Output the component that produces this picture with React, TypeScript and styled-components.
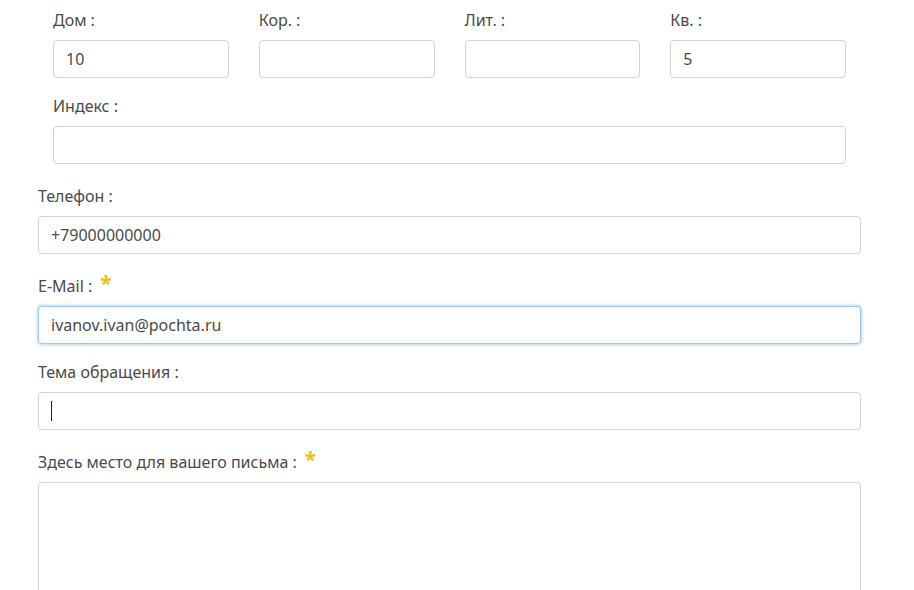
import React from 'react'
import styled, { createGlobalStyle, css } from 'styled-components'

const GlobalStyle = createGlobalStyle`
    body {
        margin: 0;
        background: #fff;
        font-family: "Noto Sans", "Open Sans", sans-serif;
        color: #454545;
    }
`

type FieldDef = {
    label: string
    value?: string
    required?: boolean
    focused?: boolean
    caret?: boolean
}

const addressRow: FieldDef[] = [
    { label: 'Дом :', value: '10' },
    { label: 'Кор. :' },
    { label: 'Лит. :' },
    { label: 'Кв. :', value: '5' },
]

const Field: React.FC<FieldDef> = ({ label, value, required, focused, caret }) => (
    <FieldBox>
        <Label $required={required}>
            {label}
            {required && <Star>*</Star>}
        </Label>
        <InputWrap>
            <Input defaultValue={value} $focused={focused} />
            {caret && <Caret />}
        </InputWrap>
    </FieldBox>
)

const App: React.FC = () => {
    return (
        <>
            <GlobalStyle />
            <Form onSubmit={(e) => e.preventDefault()}>
                <Address>
                    <Row>
                        {addressRow.map((f) => (
                            <Field key={f.label} {...f} />
                        ))}
                    </Row>
                    <Field label="Индекс :" />
                </Address>
                <Field label="Телефон :" value="+79000000000" />
                <Field label="E-Mail :" value="ivanov.ivan@pochta.ru" required focused />
                <Field label="Тема обращения :" caret />
                <FieldBox>
                    <Label $required>
                        Здесь место для вашего письма :
                        <Star>*</Star>
                    </Label>
                    <TextArea />
                </FieldBox>
            </Form>
        </>
    )
}

const Form = styled.form`
    width: 823px;
    margin-left: 38px;
    padding-top: 10px;
`

const Address = styled.div`
    padding: 0 15px 4px;
`

const Row = styled.div`
    display: grid;
    grid-template-columns: repeat(4, 1fr);
    column-gap: 30px;
`

const FieldBox = styled.div`
    margin-bottom: 18px;
`

const Label = styled.label<{ $required?: boolean }>`
    display: block;
    font-size: 16px;
    line-height: 20px;
    margin-bottom: 10px;
    color: #4a4a4a;
    ${(p) =>
        p.$required &&
        css`
            padding-top: 4px;
        `}
`

const Star = styled.span`
    position: relative;
    top: -1px;
    margin-left: 8px;
    color: #f2bb16;
    font-size: 21px;
    font-weight: 700;
    line-height: 0;
`

const InputWrap = styled.div`
    position: relative;
`

const Input = styled.input<{ $focused?: boolean }>`
    display: block;
    box-sizing: border-box;
    width: 100%;
    height: 38px;
    padding: 0 12px;
    border: 1px solid #d3d3d3;
    border-radius: 4px;
    font-family: "Noto Sans", "Open Sans", sans-serif;
    font-size: 16px;
    color: #4a4a4a;
    background: #fff;
    outline: none;
    ${(p) =>
        p.$focused &&
        css`
            border-color: #9cc6e8;
            box-shadow: 0 0 3px 1px rgba(120, 175, 225, 0.55);
        `}
`

const Caret = styled.span`
    position: absolute;
    left: 13px;
    top: 9px;
    width: 1px;
    height: 20px;
    background: #222;
`

const TextArea = styled.textarea`
    display: block;
    box-sizing: border-box;
    width: 100%;
    height: 150px;
    border: 1px solid #d3d3d3;
    border-radius: 4px;
    resize: none;
    outline: none;
`

export default App
